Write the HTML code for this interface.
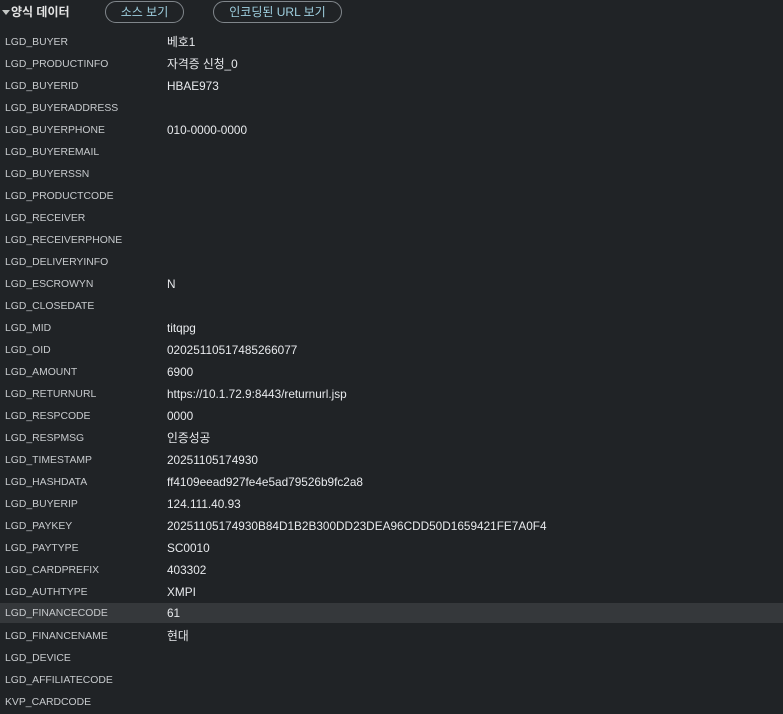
<!DOCTYPE html>
<html><head><meta charset="utf-8"><style>
body{margin:0;background:#202326;width:783px;height:708px;overflow:hidden;font-family:"Liberation Sans","Noto Sans CJK KR",sans-serif;}
.hdr{position:absolute;top:0;left:0;height:26px;width:783px;}
.tri{position:absolute;left:2px;top:10px;width:0;height:0;border-left:4px solid transparent;border-right:4px solid transparent;border-top:5px solid #c4c7c5;}
.title{position:absolute;left:11px;top:0;line-height:24px;font-size:12px;font-weight:bold;color:#e3e3e3;}
.btn{position:absolute;top:1px;height:20px;border:1px solid #80868b;border-radius:11px;color:#9fd0e0;font-size:12px;line-height:20px;text-align:center;}
.row{position:absolute;left:0;width:783px;height:22px;line-height:22px;}
.row.hl{background:#35383b;top:603px !important;height:20px;line-height:20px;}
.k{position:absolute;left:5px;top:2px;font-size:10.4px;color:#c7cacd;}
.v{position:absolute;left:167px;top:1px;font-size:11.8px;color:#e8eaed;}
.hl .k{top:1px}.hl .v{top:0}
</style></head><body>
<div class="hdr"><div class="tri"></div><div class="title">양식 데이터</div>
<div class="btn" style="left:105px;width:77px">소스 보기</div>
<div class="btn" style="left:213px;width:127px">인코딩된 URL 보기</div></div>
<div class="row" style="top:30px"><span class="k">LGD_BUYER</span><span class="v">베호1</span></div>
<div class="row" style="top:52px"><span class="k">LGD_PRODUCTINFO</span><span class="v">자격증 신청_0</span></div>
<div class="row" style="top:74px"><span class="k">LGD_BUYERID</span><span class="v">HBAE973</span></div>
<div class="row" style="top:96px"><span class="k">LGD_BUYERADDRESS</span></div>
<div class="row" style="top:118px"><span class="k">LGD_BUYERPHONE</span><span class="v">010-0000-0000</span></div>
<div class="row" style="top:140px"><span class="k">LGD_BUYEREMAIL</span></div>
<div class="row" style="top:162px"><span class="k">LGD_BUYERSSN</span></div>
<div class="row" style="top:184px"><span class="k">LGD_PRODUCTCODE</span></div>
<div class="row" style="top:206px"><span class="k">LGD_RECEIVER</span></div>
<div class="row" style="top:228px"><span class="k">LGD_RECEIVERPHONE</span></div>
<div class="row" style="top:250px"><span class="k">LGD_DELIVERYINFO</span></div>
<div class="row" style="top:272px"><span class="k">LGD_ESCROWYN</span><span class="v">N</span></div>
<div class="row" style="top:294px"><span class="k">LGD_CLOSEDATE</span></div>
<div class="row" style="top:316px"><span class="k">LGD_MID</span><span class="v">titqpg</span></div>
<div class="row" style="top:338px"><span class="k">LGD_OID</span><span class="v">02025110517485266077</span></div>
<div class="row" style="top:360px"><span class="k">LGD_AMOUNT</span><span class="v">6900</span></div>
<div class="row" style="top:382px"><span class="k">LGD_RETURNURL</span><span class="v">https://10.1.72.9:8443/returnurl.jsp</span></div>
<div class="row" style="top:404px"><span class="k">LGD_RESPCODE</span><span class="v">0000</span></div>
<div class="row" style="top:426px"><span class="k">LGD_RESPMSG</span><span class="v">인증성공</span></div>
<div class="row" style="top:448px"><span class="k">LGD_TIMESTAMP</span><span class="v">20251105174930</span></div>
<div class="row" style="top:470px"><span class="k">LGD_HASHDATA</span><span class="v">ff4109eead927fe4e5ad79526b9fc2a8</span></div>
<div class="row" style="top:492px"><span class="k">LGD_BUYERIP</span><span class="v">124.111.40.93</span></div>
<div class="row" style="top:514px"><span class="k">LGD_PAYKEY</span><span class="v">20251105174930B84D1B2B300DD23DEA96CDD50D1659421FE7A0F4</span></div>
<div class="row" style="top:536px"><span class="k">LGD_PAYTYPE</span><span class="v">SC0010</span></div>
<div class="row" style="top:558px"><span class="k">LGD_CARDPREFIX</span><span class="v">403302</span></div>
<div class="row" style="top:580px"><span class="k">LGD_AUTHTYPE</span><span class="v">XMPI</span></div>
<div class="row hl" style="top:602px"><span class="k">LGD_FINANCECODE</span><span class="v">61</span></div>
<div class="row" style="top:624px"><span class="k">LGD_FINANCENAME</span><span class="v">현대</span></div>
<div class="row" style="top:646px"><span class="k">LGD_DEVICE</span></div>
<div class="row" style="top:668px"><span class="k">LGD_AFFILIATECODE</span></div>
<div class="row" style="top:690px"><span class="k">KVP_CARDCODE</span></div>
</body></html>
